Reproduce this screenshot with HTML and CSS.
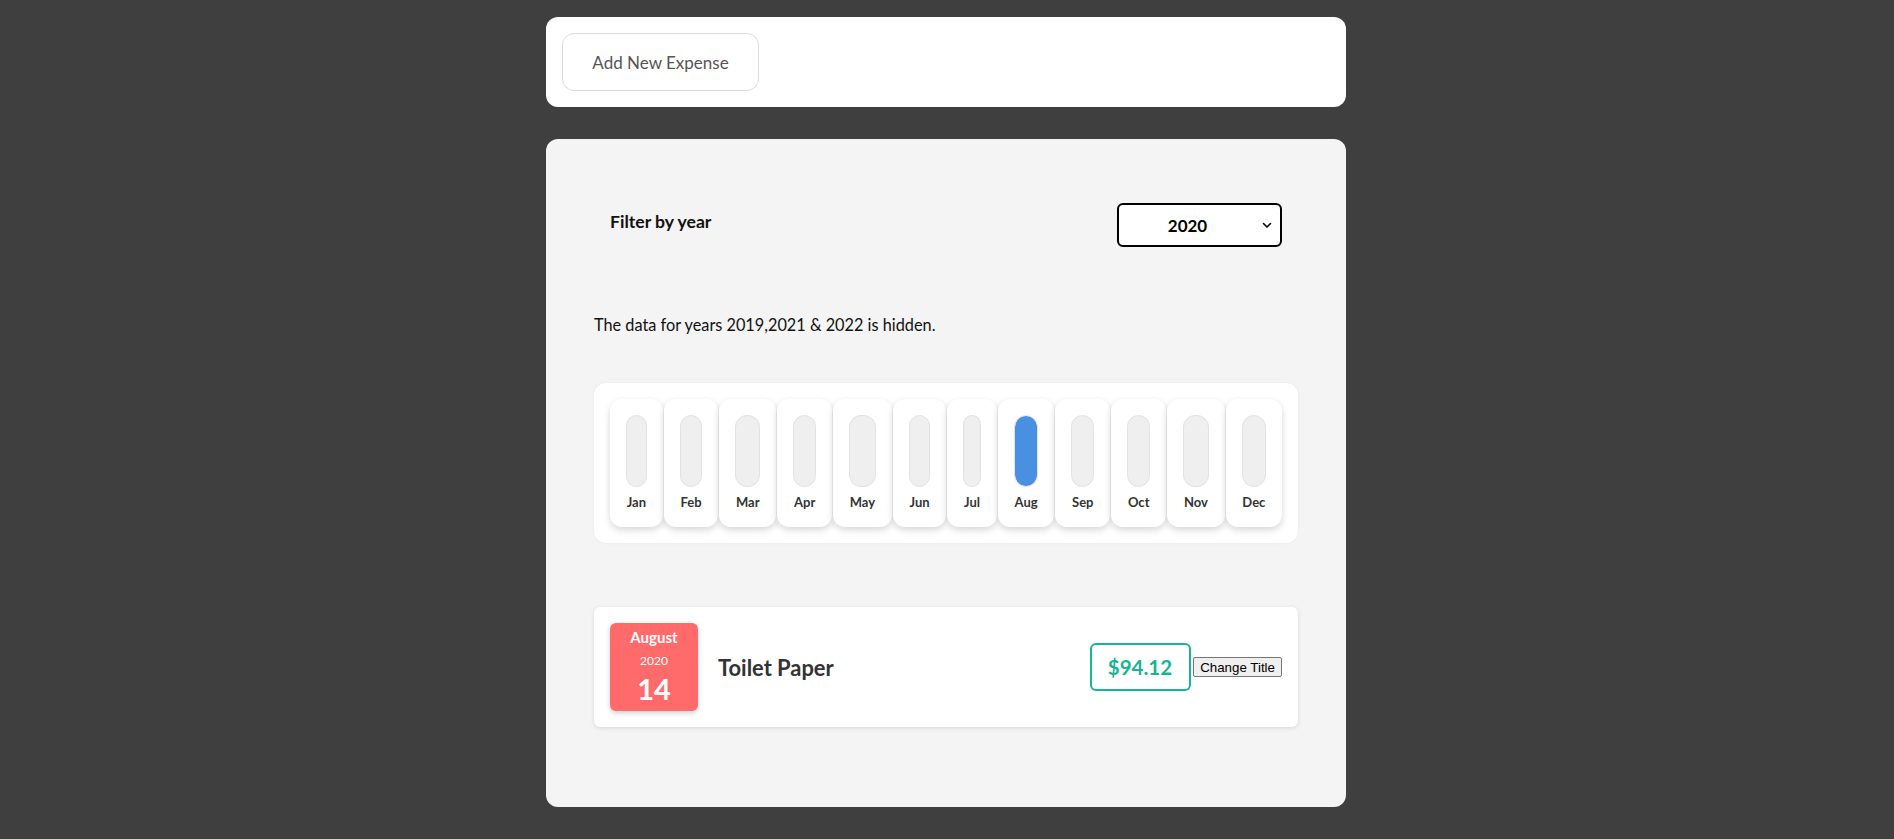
FILE: index.html
```html
<!DOCTYPE html>
<html lang="en">
<head>
<meta charset="utf-8">
<title>Expenses</title>
<link rel="stylesheet" href="styles.css">
</head>
<body>
<div class="page">
  <section class="card new-expense">
    <button class="add-btn" type="button">Add New Expense</button>
  </section>

  <section class="card expenses">
    <div class="filter">
      <label class="filter-label" for="year">Filter by year</label>
      <div class="select-wrap">
        <select id="year" class="year-select">
          <option>2020</option>
        </select>
        <svg class="chev" width="12" height="8" viewBox="0 0 12 8" aria-hidden="true">
          <path d="M2.5 2.5 L6 6 L9.5 2.5" fill="none" stroke="#000" stroke-width="1.6" stroke-linecap="round" stroke-linejoin="round"/>
        </svg>
      </div>
    </div>

    <p class="hidden-note">The data for years 2019,2021 &amp; 2022 is hidden.</p>

    <div class="chart">
      <div class="bar"><div class="track"><div class="fill" style="height:0%"></div></div><span class="label">Jan</span></div>
      <div class="bar"><div class="track"><div class="fill" style="height:0%"></div></div><span class="label">Feb</span></div>
      <div class="bar"><div class="track"><div class="fill" style="height:0%"></div></div><span class="label">Mar</span></div>
      <div class="bar"><div class="track"><div class="fill" style="height:0%"></div></div><span class="label">Apr</span></div>
      <div class="bar"><div class="track"><div class="fill" style="height:0%"></div></div><span class="label">May</span></div>
      <div class="bar"><div class="track"><div class="fill" style="height:0%"></div></div><span class="label">Jun</span></div>
      <div class="bar"><div class="track"><div class="fill" style="height:0%"></div></div><span class="label">Jul</span></div>
      <div class="bar"><div class="track"><div class="fill" style="height:100%"></div></div><span class="label">Aug</span></div>
      <div class="bar"><div class="track"><div class="fill" style="height:0%"></div></div><span class="label">Sep</span></div>
      <div class="bar"><div class="track"><div class="fill" style="height:0%"></div></div><span class="label">Oct</span></div>
      <div class="bar"><div class="track"><div class="fill" style="height:0%"></div></div><span class="label">Nov</span></div>
      <div class="bar"><div class="track"><div class="fill" style="height:0%"></div></div><span class="label">Dec</span></div>
    </div>

    <ul class="list">
      <li class="item">
        <div class="date">
          <div class="date-month">August</div>
          <div class="date-year">2020</div>
          <div class="date-day">14</div>
        </div>
        <h2 class="title">Toilet Paper</h2>
        <div class="price">$94.12</div>
        <button class="change-btn" type="button">Change Title</button>
      </li>
    </ul>
  </section>
</div>
</body>
</html>
```

FILE: styles.css
```css
* { box-sizing: border-box; }

body {
  margin: 0;
  background: #3f3f3f;
  font-family: Lato, "Open Sans", "Liberation Sans", sans-serif;
  color: #222;
}

.page {
  width: 800px;
  margin: 17px 0 0 calc(50% - 401px);
}

.card {
  border-radius: 12px;
}

.new-expense {
  background: #fff;
  padding: 16px;
}

.add-btn {
  display: block;
  width: 197px;
  height: 58px;
  border: 1px solid #dcdcdc;
  border-radius: 12px;
  background: #fff;
  color: #555;
  font-family: Lato, "Open Sans", sans-serif;
  font-size: 17px;
  cursor: pointer;
}

.expenses {
  margin-top: 32px;
  background: #f4f4f4;
  padding: 48px 48px 80px;
}

.filter {
  display: flex;
  justify-content: space-between;
  align-items: center;
  padding: 16px;
}

.filter-label {
  font-weight: 700;
  font-size: 17.6px;
  color: #111;
  margin-top: -8px;
}

.select-wrap {
  position: relative;
  width: 165px;
  height: 44px;
}

.year-select {
  appearance: none;
  -webkit-appearance: none;
  width: 100%;
  height: 100%;
  border: 2px solid #000;
  border-radius: 6px;
  background: #fff;
  font-family: Lato, "Open Sans", sans-serif;
  font-weight: 700;
  font-size: 17px;
  color: #000;
  text-align: center;
  text-align-last: center;
  padding: 0 24px 0 0;
}

.chev {
  position: absolute;
  right: 9px;
  top: 18px;
}

.hidden-note {
  margin: 50px 0 46px;
  font-size: 16.3px;
  line-height: 24px;
  color: #111;
}

.chart {
  display: flex;
  gap: 1px;
  padding: 16px;
  background: #fff;
  border-radius: 12px;
  box-shadow: 0 0 3px rgba(0, 0, 0, 0.06);
}

.bar {
  flex: 1 1 auto;
  height: 128px;
  padding: 16px 16px 0;
  background: #fff;
  border-radius: 12px;
  box-shadow: 0 3px 7px rgba(0, 0, 0, 0.16);
  display: flex;
  flex-direction: column;
  align-items: center;
}

.track {
  width: 100%;
  height: 72px;
  background: #efefef;
  border: 1px solid #e2e2e2;
  border-radius: 12px;
  overflow: hidden;
  display: flex;
  flex-direction: column;
  justify-content: flex-end;
}

.fill {
  width: 100%;
  background: #4a90e2;
  border-radius: 12px;
}

.label {
  margin-top: 7px;
  font-size: 13px;
  line-height: 16px;
  font-weight: 700;
  color: #333;
}

.list {
  list-style: none;
  margin: 64px 0 0;
  padding: 0;
}

.item {
  display: flex;
  align-items: center;
  padding: 16px;
  background: #fff;
  border-radius: 6px;
  box-shadow: 0 1px 4px rgba(0, 0, 0, 0.12);
}

.date {
  width: 88px;
  height: 88px;
  padding-top: 4px;
  border-radius: 6px;
  background: #ff6b6b;
  color: #fff;
  display: flex;
  flex-direction: column;
  align-items: center;
  justify-content: flex-start;
  box-shadow: 0 2px 5px rgba(0, 0, 0, 0.2);
}

.date-month {
  font-weight: 700;
  font-size: 15px;
  line-height: 20px;
}

.date-year {
  margin-top: 4px;
  font-size: 12px;
  line-height: 20px;
}

.date-day {
  font-weight: 700;
  font-size: 29px;
  line-height: 36px;
}

.title {
  flex: 1;
  margin: 0 0 0 20px;
  font-size: 21.9px;
  font-weight: 700;
  color: #333;
}

.price {
  height: 48px;
  padding: 0 17px 0 16px;
  display: flex;
  align-items: center;
  border: 2px solid #17b495;
  border-radius: 6px;
  color: #17b495;
  font-weight: 700;
  font-size: 20.5px;
}

.change-btn {
  margin-left: 2px;
  font-family: "Liberation Sans", Arial, sans-serif;
  font-size: 13.333px;
  padding: 1px 6px;
  height: 20px;
  border: 1px solid #767676;
  border-radius: 2px;
  background: #efefef;
  color: #000;
}
```
